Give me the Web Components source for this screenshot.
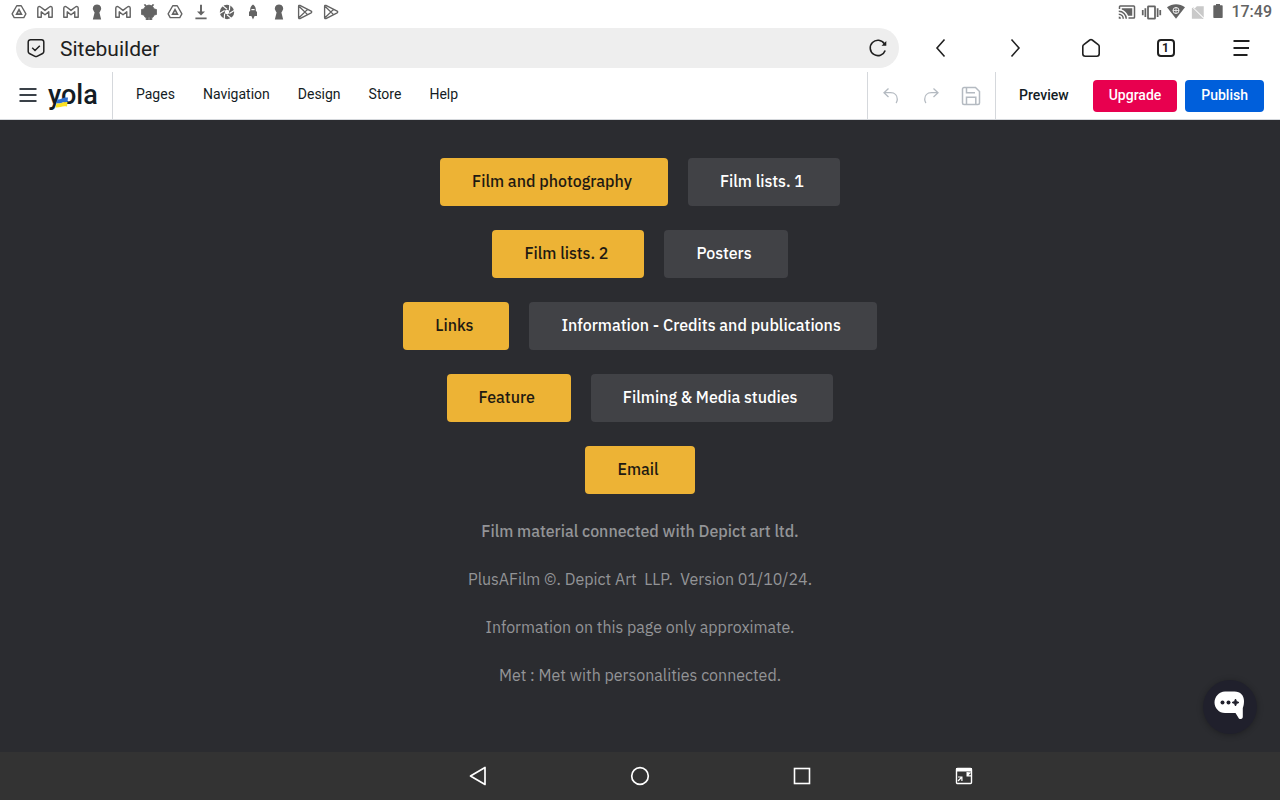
<!DOCTYPE html>
<html lang="en">
<head>
<meta charset="utf-8">
<meta name="viewport" content="width=device-width, initial-scale=1">
<title>Sitebuilder</title>
<style>
  body {
    margin: 0;
    font-family: Roboto, "Liberation Sans", sans-serif;
    background: #2b2c30;
  }
</style>
</head>
<body>
<site-builder></site-builder>

<script>
const RESET = `
  :host, * { box-sizing: border-box; }
  button {
    all: unset;
    box-sizing: border-box;
    display: flex;
    align-items: center;
    justify-content: center;
    cursor: pointer;
  }
  button:focus-visible { outline: 2px solid #005fdb; }
`;

const ICONS = {
  drive: ["0 0 20 20", `<path d="M7.200 2.200h5.600l5.800 10.200-2.600 4.600H4l-2.600-4.600z" fill="none" stroke="currentColor" stroke-width="1.700" stroke-linejoin="round"/><path d="M10 7l3 5.600H7z" fill="none" stroke="currentColor" stroke-width="2"/>`],
  gmail: ["0 0 20 20", `<path d="M1 16.500V5.200C1 3 3 2.600 4.500 3.800L10 8l5.500-4.200C17 2.600 19 3 19 5.200v11.300h-4.300V9.800L10 13.400 5.300 9.800v6.700z" fill="none" stroke="currentColor" stroke-width="1.800" stroke-linejoin="round"/>`],
  keyhole: ["0 0 20 20", `<path d="M10 .5a5.200 5.200 0 0 1 4 8.600l-1 1.400 2.200 9H4.800l2.200-9-1-1.400A5.200 5.200 0 0 1 10 .5z"/>`],
  bug: ["0 0 20 20", `<path d="M5.500 3L4.200 1l1-.6 1.500 1.800a7 7 0 0 1 6.600 0L14.800.4l1 .6-1.300 2 2 3.200L19.500 7v6l-3 .8-1.500 2.700h-1.500V20h-2.700v-3H9.200v3H6.500v-3.500H5l-1.500-2.700L.5 13V7l3-.8z" stroke="currentColor" stroke-linejoin="round"/>`],
  download: ["0 0 20 20", `<path d="M8.800 1h2.400v8.500H15L10 14.500 5 9.500h3.800zM3 17h14v2H3z"/>`],
  shutter: ["0 0 20 20", `<circle cx="10" cy="10" r="9"/><g stroke="#fff" stroke-width="1.500" fill="none"><path d="M10 6.500L4.500 2M13 8.200L13.500 1M13 11.800L19 8M10 13.500l5.500 4.500M7 11.800L6.500 19M7 8.200L1 12"/></g><circle cx="10" cy="10" r="2.800" fill="#fff"/>`],
  rocket: ["0 0 20 20", `<path d="M10 .5c2.200 1.500 3.500 3.500 3.500 6.500v1.500L15 10v5h-3l-2 4.500L8 15H5v-5l1.500-1.500V7c0-3 1.300-5 3.500-6.500z"/><path d="M8 7h4" stroke="#fff" stroke-width="1.500"/>`],
  play: ["0 0 20 20", `<path d="M2 2.800c0-1 .9-1.400 1.700-1l14 7.200c.9.500.9 1.500 0 2l-14 7.200c-.8.400-1.700 0-1.700-1zM2.800 3l10.400 10.300M2.800 17L13.200 6.700" fill="none" stroke="currentColor" stroke-width="1.700" stroke-linejoin="round"/>`],
  cast: ["0 0 24 24", `<path d="M1 18v3h3a3 3 0 0 0-3-3zm0-4v2a5 5 0 0 1 5 5h2a7 7 0 0 0-7-7zm0-4v2a9 9 0 0 1 9 9h2A11 11 0 0 0 1 10zM21 3H3a2 2 0 0 0-2 2v3h2V5h18v14h-7v2h7a2 2 0 0 0 2-2V5a2 2 0 0 0-2-2z"/><path d="M5 7v1.600c4 1.300 7 4.400 8.400 8.400H19V7z"/>`],
  vibrate: ["0 0 24 24", `<path d="M1 15h2V9H1zm3 2h2V7H4zm17-8v6h2V9zm-3 8h2V7h-2zM15.500 4h-7A1.500 1.500 0 0 0 7 5.500v13A1.500 1.500 0 0 0 8.500 20h7a1.500 1.500 0 0 0 1.500-1.500v-13A1.500 1.500 0 0 0 15.500 4zM15 18H9V6h6z"/>`],
  wifi: ["0 0 24 24", `<path d="M12 21L0 5.500C7 .2 17 .2 24 5.500z"/><circle cx="12" cy="10" r="4" fill="none" stroke="#fff" stroke-width="1.200"/><path d="M8 10h8M12 6v8" stroke="#fff"/>`],
  nosim: ["0 0 24 24", `<path d="M22 2v18L7.500 5.500 11 2zM3 5l2-2L22 21l-1.500 1.500L19 22H3V8z" opacity=".35"/><path d="M3 2.500l19 19" stroke="#fff" stroke-width="1.500"/>`],
  battery: ["0 0 24 24", `<path d="M9 0h6v2h3a1 1 0 0 1 1 1v17a1 1 0 0 1-1 1H6a1 1 0 0 1-1-1V3a1 1 0 0 1 1-1h3z"/>`],
  shield: ["0 0 20 20", `<path d="M4.500 1.700h11a2.300 2.300 0 0 1 2.300 2.300v9.500c0 1-.4 1.600-1.200 2L11 18.400c-.7.300-1.300.300-2 0l-5.600-2.900c-.8-.4-1.200-1-1.200-2V4a2.300 2.300 0 0 1 2.300-2.300zM6.200 9.800L9 12.500l4.800-4.800" fill="none" stroke="currentColor" stroke-width="1.500"/>`],
  reload: ["0 0 20 20", `<path d="M17.200 12.500a7.700 7.700 0 1 1-.8-6.800" fill="none" stroke="currentColor" stroke-width="1.600"/><path d="M18.300 3v4.800h-4.800l1.800-1.800z"/>`],
  back: ["0 0 20 20", `<path d="M13.500 1.500L6 10l7.500 8.500" fill="none" stroke="currentColor" stroke-width="1.600"/>`],
  forward: ["0 0 20 20", `<path d="M5.500 1.500L13 10l-7.500 8.500" fill="none" stroke="currentColor" stroke-width="1.600"/>`],
  home: ["0 0 20 20", `<path d="M1.800 8.500c0-.8.300-1.400 1-1.900L8.800 2c.8-.6 1.600-.6 2.400 0l6 4.600c.7.500 1 1.100 1 1.900v7.200a2.500 2.500 0 0 1-2.500 2.500H4.300a2.500 2.500 0 0 1-2.500-2.500z" fill="none" stroke="currentColor" stroke-width="1.600"/>`],
  menu: ["0 0 20 20", `<path d="M2.500 3h16M2.500 10h15.500M2.500 17h14" fill="none" stroke="currentColor" stroke-width="2"/>`],
  burger: ["0 0 20 20", `<path d="M1.500 3h17M1.500 9h17M1.500 15h17" fill="none" stroke="currentColor" stroke-width="1.800"/>`],
  undo: ["0 0 20 20", `<path d="M7.500 2.500L3 6.700l4.500 4.200M3 6.700h6.500c4.500 0 6.800 3 6.800 6.500 0 1.500-.4 2.700-1.200 3.800" fill="none" stroke="currentColor" stroke-width="1.300"/>`],
  redo: ["0 0 20 20", `<path d="M12.500 2.500L17 6.700l-4.500 4.200M17 6.700h-6.500c-4.500 0-6.800 3-6.800 6.500 0 1.500.4 2.700 1.200 3.800" fill="none" stroke="currentColor" stroke-width="1.300"/>`],
  save: ["0 0 20 20", `<path d="M3 1.500h11.500l4 4V17a1.500 1.500 0 0 1-1.500 1.500H3A1.500 1.500 0 0 1 1.500 17V3A1.500 1.500 0 0 1 3 1.500zM5.500 1.800v5h8.500M5.500 18.200v-7h9.300v7" fill="none" stroke="currentColor" stroke-width="1.500"/>`],
  navback: ["0 0 20 20", `<path d="M17 1.500v17L2.500 10z" fill="none" stroke="currentColor" stroke-width="1.700" stroke-linejoin="round"/>`],
  navhome: ["0 0 20 20", `<circle cx="10" cy="10" r="8.300" fill="none" stroke="currentColor" stroke-width="1.700"/>`],
  navrecent: ["0 0 20 20", `<rect x="2.500" y="2.500" width="15" height="15" fill="none" stroke="currentColor" stroke-width="1.600"/>`],
  navshrink: ["0 0 20 20", `<rect x="2.500" y="2.500" width="15" height="15" rx="1" fill="none" stroke="currentColor" stroke-width="1.400"/><path d="M2 2h16v3.500H2zM4 10.500h4.500V15H7.300v-2.500L4.500 15.500l-1-1 3-3H4zM12.500 6v4.500H17V9.300h-2.500L17.300 6.500z"/>`],
  chat: ["0 0 32 32", `<path d="M11 .5h9.500c6 0 9.500 4 9.500 9.500 0 3-.5 5-1.200 7v8.500c0 1.500-.5 2.500-2 2.500s-2-.5-2.500-1.500L21.500 22H11C5 22 .5 17 .5 11.500S5 .5 11 .5z"/><g fill="#20202c"><circle cx="8.500" cy="11.500" r="2"/><circle cx="14.500" cy="11.500" r="2"/><path d="M21.500 8l1 2.500 2.500 1-2.500 1-1 2.500-1-2.500-2.500-1 2.500-1z" stroke="#20202c"/></g>`]
};

class UiIcon extends HTMLElement {
  constructor() {
    super();
    this.attachShadow({ mode: "open" });
  }
  connectedCallback() {
    const [box, shape] = ICONS[this.getAttribute("name")];
    const size = this.getAttribute("size") || 20;
    this.shadowRoot.innerHTML = `
      <style>
        :host { display: block; flex: none; width: ${size}px; height: ${size}px; }
        svg { display: block; width: 100%; height: 100%; fill: currentColor; }
      </style>
      <svg viewBox="${box}" aria-hidden="true">${shape}</svg>
    `;
  }
}
customElements.define("ui-icon", UiIcon);

class StatusBar extends HTMLElement {
  constructor() {
    super();
    this.attachShadow({ mode: "open" });
    const apps = ["drive", "gmail", "gmail", "keyhole", "gmail", "bug", "drive",
      "download", "shutter", "rocket", "keyhole", "play", "play"];
    this.shadowRoot.innerHTML = `
      <style>
        :host {
          box-sizing: border-box;
          display: flex;
          align-items: center;
          justify-content: space-between;
          height: 24px;
          padding: 0 8px 0 11px;
          background: #fff;
          color: #636363;
        }
        div { display: flex; align-items: center; }
        .apps { gap: 10px; }
        .system { gap: 5px; }
        time { font-size: 16px; line-height: 24px; font-weight: 500; }
      </style>
      <div class="apps">${apps.map((n) => `<ui-icon name="${n}" size="16"></ui-icon>`).join("")}</div>
      <div class="system">
        <ui-icon name="cast" size="18"></ui-icon>
        <ui-icon name="vibrate" size="21"></ui-icon>
        <ui-icon name="wifi" size="18"></ui-icon>
        <ui-icon name="nosim" size="15"></ui-icon>
        <ui-icon name="battery" size="16"></ui-icon>
        <time>17:49</time>
      </div>
    `;
  }
}
customElements.define("status-bar", StatusBar);

class BrowserBar extends HTMLElement {
  constructor() {
    super();
    this.attachShadow({ mode: "open" });
    this.shadowRoot.innerHTML = `
      <style>
        ${RESET}
        :host {
          display: flex;
          align-items: center;
          gap: 4px;
          height: 48px;
          padding: 0 2px 0 16px;
          background: #fff;
          color: #202020;
        }
        .address {
          display: flex;
          flex: 1;
          align-items: center;
          gap: 14px;
          height: 40px;
          padding: 0 11px 0 10px;
          border-radius: 20px;
          background: #eee;
        }
        input {
          flex: 1;
          min-width: 0;
          height: 40px;
          border: 0;
          padding: 2px 0 0;
          outline: 0;
          background: none;
          font: 21px/28px Roboto, "Liberation Sans", sans-serif;
          color: #202020;
        }
        .tools { display: grid; grid-template-columns: repeat(5, 75px); }
        .tools button { height: 40px; }
        .count {
          width: 18px;
          height: 18px;
          border: 2px solid #202020;
          border-radius: 4px;
          font-size: 12px;
          line-height: 14px;
          font-weight: 700;
          text-align: center;
        }
      </style>
      <div class="address">
        <ui-icon name="shield"></ui-icon>
        <input type="text" value="Sitebuilder" aria-label="Address">
        <button type="button" aria-label="Reload"><ui-icon name="reload"></ui-icon></button>
      </div>
      <div class="tools">
        <button type="button" aria-label="Back"><ui-icon name="back"></ui-icon></button>
        <button type="button" aria-label="Forward"><ui-icon name="forward"></ui-icon></button>
        <button type="button" aria-label="Home"><ui-icon name="home"></ui-icon></button>
        <button type="button" aria-label="Tabs"><span class="count">1</span></button>
        <button type="button" aria-label="Menu"><ui-icon name="menu"></ui-icon></button>
      </div>
    `;
  }
}
customElements.define("browser-bar", BrowserBar);

class YolaLogo extends HTMLElement {
  constructor() {
    super();
    this.attachShadow({ mode: "open" });
    this.shadowRoot.innerHTML = `
      <style>
        :host { display: block; position: relative; width: 49px; color: #141c24; }
        span { display: block; font-size: 27px; line-height: 32px; font-weight: 500; padding-bottom: 2px; }
        /* ribbon across the foot of the y */
        svg { position: absolute; left: 7px; bottom: 5px; width: 14px; height: 11px; }
      </style>
      <span>yola</span>
      <svg viewBox="0 0 14 11" aria-hidden="true">
        <path d="M2.500 2.500c4 0 5-2.500 10.500-2l-.5 4.500c-4.500-.5-6.500 2-11 1.500z" fill="#2f6fd0"/>
        <path d="M1.500 6.500c4.500.5 6.500-2 11-1.500L12 9.500C7 8.500 5 11 .5 10.500z" fill="#fbe122"/>
      </svg>
    `;
  }
}
customElements.define("yola-logo", YolaLogo);

class ActionButton extends HTMLElement {
  constructor() {
    super();
    this.attachShadow({ mode: "open" });
    this.shadowRoot.innerHTML = `
      <style>
        ${RESET}
        :host { display: block; }
        button {
          height: 32px;
          padding: 0 16px 2px;
          border-radius: 4px;
          font-size: 14px;
          line-height: 20px;
          font-weight: 500;
          color: #141c24;
        }
        :host([kind="upgrade"]) button { background: #e8004f; color: #fff; }
        :host([kind="publish"]) button { background: #005fdb; color: #fff; }
      </style>
      <button type="button"><slot></slot></button>
    `;
  }
}
customElements.define("action-button", ActionButton);

class EditorBar extends HTMLElement {
  constructor() {
    super();
    this.attachShadow({ mode: "open" });
    this.shadowRoot.innerHTML = `
      <style>
        ${RESET}
        :host {
          display: flex;
          height: 48px;
          border-bottom: 1px solid #d5d8dc;
          background: #fff;
          color: #141c24;
        }
        .brand, .history, .actions, nav { display: flex; align-items: center; }
        .brand {
          gap: 10px;
          padding: 0 15px 0 18px;
          border-right: 1px solid #d5d8dc;
        }
        .brand button { color: #3a4148; }
        nav { flex: 1; gap: 28px; padding: 0 23px; }
        nav button { font-size: 14px; line-height: 20px; padding-bottom: 4px; }
        .history {
          gap: 20px;
          padding: 0 14px 0 13px;
          border: solid #d5d8dc;
          border-width: 0 1px;
          color: #b4bac1;
        }
        .actions { gap: 8px; padding: 0 16px 0 7px; }
      </style>
      <div class="brand">
        <button type="button" aria-label="Main menu"><ui-icon name="burger"></ui-icon></button>
        <yola-logo></yola-logo>
      </div>
      <nav>
        <button type="button">Pages</button>
        <button type="button">Navigation</button>
        <button type="button">Design</button>
        <button type="button">Store</button>
        <button type="button">Help</button>
      </nav>
      <div class="history">
        <button type="button" aria-label="Undo"><ui-icon name="undo"></ui-icon></button>
        <button type="button" aria-label="Redo"><ui-icon name="redo"></ui-icon></button>
        <button type="button" aria-label="Save"><ui-icon name="save"></ui-icon></button>
      </div>
      <div class="actions">
        <action-button>Preview</action-button>
        <action-button kind="upgrade">Upgrade</action-button>
        <action-button kind="publish">Publish</action-button>
      </div>
    `;
  }
}
customElements.define("editor-bar", EditorBar);

class LinkButton extends HTMLElement {
  constructor() {
    super();
    this.attachShadow({ mode: "open" });
    this.shadowRoot.innerHTML = `
      <style>
        :host { display: block; }
        a {
          display: block;
          padding: 11px 36px 13px 32px;
          border-radius: 4px;
          background: #414246;
          color: #fff;
          font-weight: 500;
          text-decoration: none;
        }
        :host([primary]) a { background: #edb335; color: #1f1a12; }
      </style>
      <a href="#"><slot></slot></a>
    `;
  }
}
customElements.define("link-button", LinkButton);

class SitePage extends HTMLElement {
  constructor() {
    super();
    this.attachShadow({ mode: "open" });
    this.shadowRoot.innerHTML = `
      <style>
        :host {
          display: flex;
          flex-direction: column;
          gap: 25px;
          padding: 38px 16px;
          background: #2b2c30;
          color: #939497;
          font-family: "IBM Plex Sans", Roboto, sans-serif;
          font-size: 16px;
          line-height: 24px;
        }
        section { display: flex; flex-direction: column; gap: 24px; }
        .row { display: flex; flex-wrap: wrap; justify-content: center; gap: 20px; }
        p { margin: 0; text-align: center; white-space: pre-wrap; }
        strong { font-weight: 500; }
      </style>
      <section>
        <div class="row">
          <link-button primary>Film and photography</link-button>
          <link-button>Film lists. 1</link-button>
        </div>
        <div class="row">
          <link-button primary>Film lists. 2</link-button>
          <link-button>Posters</link-button>
        </div>
        <div class="row">
          <link-button primary>Links</link-button>
          <link-button>Information - Credits and publications</link-button>
        </div>
        <div class="row">
          <link-button primary>Feature</link-button>
          <link-button>Filming &amp; Media studies</link-button>
        </div>
        <div class="row">
          <link-button primary>Email</link-button>
        </div>
      </section>
      <section>
        <p><strong>Film material connected with Depict art ltd.</strong></p>
        <p>PlusAFilm ©. Depict Art  LLP.  Version 01/10/24.</p>
        <p>Information on this page only approximate.</p>
        <p>Met : Met with personalities connected.</p>
      </section>
    `;
  }
}
customElements.define("site-page", SitePage);

class ChatLauncher extends HTMLElement {
  constructor() {
    super();
    this.attachShadow({ mode: "open" });
    this.shadowRoot.innerHTML = `
      <style>
        ${RESET}
        :host { display: block; }
        button {
          width: 54px;
          height: 54px;
          border-radius: 50%;
          background: #20202c;
          color: #fff;
          box-shadow: 0 1px 6px rgba(0, 0, 0, .3);
        }
      </style>
      <button type="button" aria-label="Chat"><ui-icon name="chat" size="32"></ui-icon></button>
    `;
  }
}
customElements.define("chat-launcher", ChatLauncher);

class SystemNav extends HTMLElement {
  constructor() {
    super();
    this.attachShadow({ mode: "open" });
    this.shadowRoot.innerHTML = `
      <style>
        ${RESET}
        :host {
          display: grid;
          grid-template-columns: repeat(5, 162px);
          justify-content: center;
          height: 48px;
          background: #333;
          color: #fff;
        }
      </style>
      <span></span>
      <button type="button" aria-label="Back"><ui-icon name="navback"></ui-icon></button>
      <button type="button" aria-label="Home"><ui-icon name="navhome"></ui-icon></button>
      <button type="button" aria-label="Recent apps"><ui-icon name="navrecent"></ui-icon></button>
      <button type="button" aria-label="Shrink window"><ui-icon name="navshrink"></ui-icon></button>
    `;
  }
}
customElements.define("system-nav", SystemNav);

class SiteBuilder extends HTMLElement {
  constructor() {
    super();
    this.attachShadow({ mode: "open" });
    this.shadowRoot.innerHTML = `
      <style>
        :host { display: flex; flex-direction: column; min-height: 100vh; }
        main { position: relative; flex: 1; }
        /* floats over the page, bottom right */
        chat-launcher { position: absolute; right: 23px; bottom: 18px; }
      </style>
      <status-bar></status-bar>
      <browser-bar></browser-bar>
      <editor-bar></editor-bar>
      <main>
        <site-page></site-page>
        <chat-launcher></chat-launcher>
      </main>
      <system-nav></system-nav>
    `;
  }
}
customElements.define("site-builder", SiteBuilder);
</script>
</body>
</html>
